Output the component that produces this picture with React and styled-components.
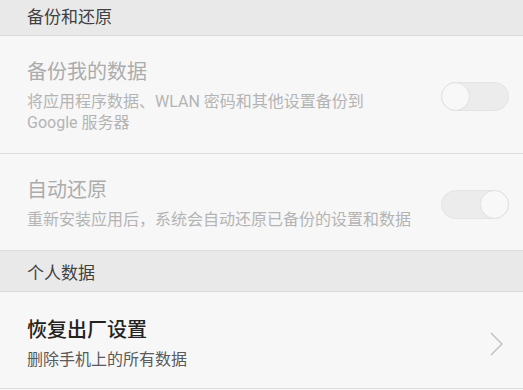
import React from "react";
import styled, { createGlobalStyle } from "styled-components";

const GlobalStyle = createGlobalStyle`
  html, body {
    margin: 0;
    padding: 0;
    background: #f7f7f7;
  }
  * {
    box-sizing: border-box;
  }
`;

const Page = styled.div`
  width: 523px;
  background: #f7f7f7;
  font-family: Roboto, "Noto Sans CJK SC", sans-serif;
`;

const SectionHeader = styled.div`
  background: #e9e9e9;
  color: #404040;
  font-size: 17px;
  font-weight: 400;
  line-height: 20px;
  padding: ${(p) => (p.$top ? "7px" : "12px")} 27px 8px;
  border-bottom: 1px solid #dadada;
`;

const Item = styled.div`
  display: flex;
  align-items: center;
  justify-content: space-between;
  padding: ${(p) => p.$pad || "24px 14px 20px 27px"};
  border-bottom: 1px solid #dcdcdc;
  background: #f7f7f7;
`;

const Texts = styled.div`
  display: flex;
  flex-direction: column;
`;

const Title = styled.div`
  font-size: 20px;
  line-height: 24px;
  font-weight: ${(p) => (p.$disabled ? 400 : 500)};
  color: ${(p) => (p.$disabled ? "#acacac" : "#222222")};
  margin-bottom: 7px;
`;

const Desc = styled.div`
  font-size: 16px;
  line-height: 21px;
  color: ${(p) => (p.$disabled ? "#b4b4b4" : "#5a5a5a")};
`;

const Switch = styled.div`
  position: relative;
  width: 68px;
  height: 29px;
  border-radius: 15px;
  background: #ececec;
  border: 1px solid #e4e4e4;
  flex-shrink: 0;
`;

const Knob = styled.div`
  position: absolute;
  top: -1px;
  ${(p) => (p.$on ? "right: -1px;" : "left: -1px;")}
  width: 29px;
  height: 29px;
  border-radius: 50%;
  background: #f8f8f8;
  border: 1px solid #e0e0e0;
`;

const Chevron = styled.svg`
  width: 13px;
  height: 24px;
  margin-right: 6px;
  flex-shrink: 0;
`;

export default function App() {
  return (
    <Page>
      <GlobalStyle />
      <SectionHeader $top>备份和还原</SectionHeader>
      <Item>
        <Texts>
          <Title $disabled>备份我的数据</Title>
          <Desc $disabled>
            将应用程序数据、WLAN 密码和其他设置备份到
            <br />
            Google 服务器
          </Desc>
        </Texts>
        <Switch>
          <Knob />
        </Switch>
      </Item>
      <Item>
        <Texts>
          <Title $disabled>自动还原</Title>
          <Desc $disabled>重新安装应用后，系统会自动还原已备份的设置和数据</Desc>
        </Texts>
        <Switch>
          <Knob $on />
        </Switch>
      </Item>
      <SectionHeader>个人数据</SectionHeader>
      <Item $pad="26px 14px 18px 27px">
        <Texts>
          <Title>恢复出厂设置</Title>
          <Desc>删除手机上的所有数据</Desc>
        </Texts>
        <Chevron viewBox="0 0 13 24">
          <path d="M1 1 L12 12 L1 23" fill="none" stroke="#bdbdbd" strokeWidth="1.3" />
        </Chevron>
      </Item>
    </Page>
  );
}
